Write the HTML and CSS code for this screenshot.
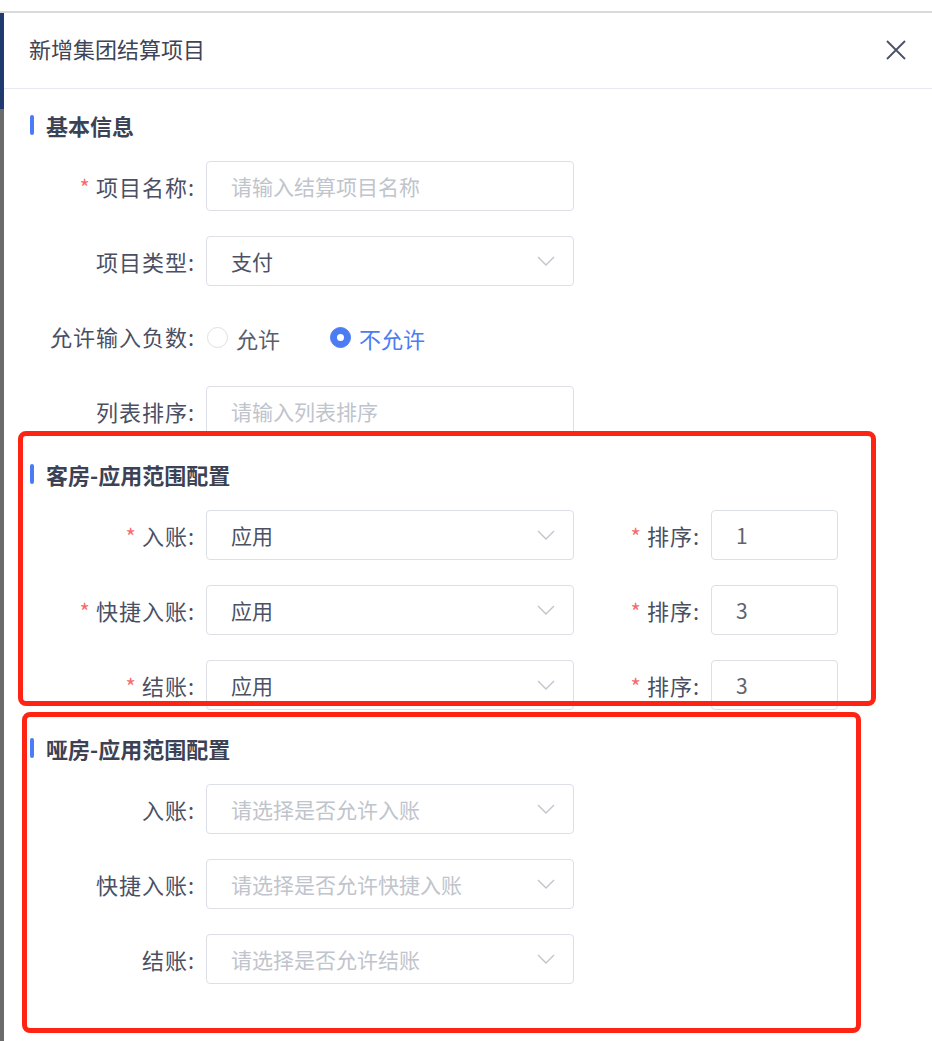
FILE: index.html
```html
<!DOCTYPE html>
<html lang="zh-CN">
<head>
    <meta charset="UTF-8">
    <meta name="viewport" content="width=device-width, initial-scale=1.0">
    <title>新增集团结算项目</title>
    <link rel="stylesheet" href="styles.css">
</head>
<body>
    <div class="page">
        <div class="topbar"></div>
        <div class="main">
            <div class="side-strip"><div class="strip-top"></div></div>

            <div class="drawer">
                <div class="drawer-header">
                    <span class="drawer-title">新增集团结算项目</span>
                    <button class="close-btn" aria-label="关闭">
                        <svg width="20" height="20" viewBox="0 0 20 20">
                            <path d="M1 1 L19 19 M19 1 L1 19" stroke="#4a5068" stroke-width="1.8" fill="none"/>
                        </svg>
                    </button>
                </div>

                <div class="drawer-body">
                    <!-- 基本信息 -->
                    <div class="section-title">基本信息</div>

                    <div class="form-row">
                        <div class="form-item">
                            <label class="form-label required">项目名称:</label>
                            <div class="input"><span class="placeholder">请输入结算项目名称</span></div>
                        </div>
                    </div>

                    <div class="form-row">
                        <div class="form-item">
                            <label class="form-label">项目类型:</label>
                            <div class="input select">
                                <span>支付</span>
                                <svg class="arrow" width="18" height="10" viewBox="0 0 18 10"><path d="M1 1 L9 9 L17 1" stroke="#c0c4cc" stroke-width="1.4" fill="none"/></svg>
                            </div>
                        </div>
                    </div>

                    <div class="form-row">
                        <div class="form-item">
                            <label class="form-label">允许输入负数:</label>
                            <div class="radio-group">
                                <span class="radio"><span class="radio-dot"></span>允许</span>
                                <span class="radio checked"><span class="radio-dot"></span>不允许</span>
                            </div>
                        </div>
                    </div>

                    <div class="form-row">
                        <div class="form-item">
                            <label class="form-label">列表排序:</label>
                            <div class="input"><span class="placeholder">请输入列表排序</span></div>
                        </div>
                    </div>

                    <!-- 客房 -->
                    <div class="section-title">客房-应用范围配置</div>

                    <div class="form-row">
                        <div class="form-item">
                            <label class="form-label required">入账:</label>
                            <div class="input select">
                                <span>应用</span>
                                <svg class="arrow" width="18" height="10" viewBox="0 0 18 10"><path d="M1 1 L9 9 L17 1" stroke="#c0c4cc" stroke-width="1.4" fill="none"/></svg>
                            </div>
                        </div>
                        <div class="form-item">
                            <label class="form-label short required">排序:</label>
                            <div class="input input-sm"><span class="num">1</span></div>
                        </div>
                    </div>

                    <div class="form-row">
                        <div class="form-item">
                            <label class="form-label required">快捷入账:</label>
                            <div class="input select">
                                <span>应用</span>
                                <svg class="arrow" width="18" height="10" viewBox="0 0 18 10"><path d="M1 1 L9 9 L17 1" stroke="#c0c4cc" stroke-width="1.4" fill="none"/></svg>
                            </div>
                        </div>
                        <div class="form-item">
                            <label class="form-label short required">排序:</label>
                            <div class="input input-sm"><span class="num">3</span></div>
                        </div>
                    </div>

                    <div class="form-row">
                        <div class="form-item">
                            <label class="form-label required">结账:</label>
                            <div class="input select">
                                <span>应用</span>
                                <svg class="arrow" width="18" height="10" viewBox="0 0 18 10"><path d="M1 1 L9 9 L17 1" stroke="#c0c4cc" stroke-width="1.4" fill="none"/></svg>
                            </div>
                        </div>
                        <div class="form-item">
                            <label class="form-label short required">排序:</label>
                            <div class="input input-sm"><span class="num">3</span></div>
                        </div>
                    </div>

                    <!-- 哑房 -->
                    <div class="section-title">哑房-应用范围配置</div>

                    <div class="form-row">
                        <div class="form-item">
                            <label class="form-label">入账:</label>
                            <div class="input select">
                                <span class="placeholder">请选择是否允许入账</span>
                                <svg class="arrow" width="18" height="10" viewBox="0 0 18 10"><path d="M1 1 L9 9 L17 1" stroke="#c0c4cc" stroke-width="1.4" fill="none"/></svg>
                            </div>
                        </div>
                    </div>

                    <div class="form-row">
                        <div class="form-item">
                            <label class="form-label">快捷入账:</label>
                            <div class="input select">
                                <span class="placeholder">请选择是否允许快捷入账</span>
                                <svg class="arrow" width="18" height="10" viewBox="0 0 18 10"><path d="M1 1 L9 9 L17 1" stroke="#c0c4cc" stroke-width="1.4" fill="none"/></svg>
                            </div>
                        </div>
                    </div>

                    <div class="form-row">
                        <div class="form-item">
                            <label class="form-label">结账:</label>
                            <div class="input select">
                                <span class="placeholder">请选择是否允许结账</span>
                                <svg class="arrow" width="18" height="10" viewBox="0 0 18 10"><path d="M1 1 L9 9 L17 1" stroke="#c0c4cc" stroke-width="1.4" fill="none"/></svg>
                            </div>
                        </div>
                    </div>
                </div>
            </div>
        </div>

        <!-- red annotation boxes -->
        <div class="mark mark-1"></div>
        <div class="mark mark-2"></div>
    </div>
</body>
</html>
```

FILE: styles.css
```css
body {
    margin: 0;
    font-family: "Noto Sans CJK SC", "Noto Sans", sans-serif;
    background: #fff;
    color: #4a4f64;
}
.page {
    position: relative;
    width: 932px;
    height: 1041px;
    overflow: hidden;
}
.topbar {
    height: 11px;
    border-bottom: 2px solid #dadada;
}
.main {
    display: flex;
    height: 1028px;
}
.side-strip {
    width: 4px;
    background: #6b6b6b;
}
.strip-top {
    height: 96px;
    background: #1f3a70;
}
.drawer {
    flex: 1;
}
.drawer-header {
    height: 75px;
    border-bottom: 1px solid #e6e9f0;
    display: flex;
    align-items: center;
    justify-content: space-between;
    padding: 0 26px 0 25px;
}
.drawer-title {
    margin-bottom: 6px;
    font-size: 22px;
    color: #3f4557;
}
.close-btn {
    border: none;
    background: none;
    padding: 0;
    width: 20px;
    height: 20px;
    margin-bottom: 2px;
    cursor: pointer;
}
.drawer-body {
    padding: 23px 0 0 26px;
}
.section-title {
    display: flex;
    align-items: center;
    height: 26px;
    margin-bottom: 23px;
    font-size: 22px;
    font-weight: 700;
    color: #3c4254;
}
.section-title::before {
    content: "";
    width: 4px;
    height: 20px;
    margin-right: 12px;
    border-radius: 2px;
    background: #4a7cf7;
}
.form-row {
    display: flex;
    height: 50px;
    margin-bottom: 25px;
}
.form-item {
    display: flex;
    align-items: center;
}
.form-label {
    width: 176px;
    padding-right: 11px;
    box-sizing: border-box;
    text-align: right;
    font-size: 22px;
    letter-spacing: 1px;
    color: #4a4f64;
}
.form-label.short {
    width: 137px;
}
.required::before {
    content: "*";
    color: #f56c6c;
    margin-right: 5px;
}
.input {
    width: 368px;
    height: 50px;
    box-sizing: border-box;
    display: flex;
    align-items: center;
    padding: 0 18px 0 24px;
    border: 1px solid #dcdfe6;
    border-radius: 4px;
    font-size: 21px;
    color: #4c5164;
}
.input-sm {
    width: 127px;
}
.select {
    justify-content: space-between;
}
.placeholder {
    color: #c0c4cc;
}
.num {
    color: #5f6370;
}
.radio-group {
    display: flex;
    align-items: center;
    padding-top: 3px;
    font-size: 22px;
}
.radio {
    display: flex;
    align-items: center;
    margin-right: 49px;
    color: #5a5e6c;
}
.radio-dot {
    width: 21px;
    height: 21px;
    box-sizing: border-box;
    margin: 0 8px 0 1px;
    border: 1px solid #dcdfe6;
    border-radius: 50%;
}
.radio.checked {
    color: #4b7cf3;
}
.radio.checked .radio-dot {
    display: flex;
    align-items: center;
    justify-content: center;
    border-color: #4b7cf3;
    background: #4b7cf3;
}
.radio.checked .radio-dot::after {
    content: "";
    width: 7px;
    height: 7px;
    border-radius: 50%;
    background: #fff;
}
.mark {
    position: absolute;
    box-sizing: border-box;
    border: 5px solid #fe2414;
    border-radius: 8px;
}
.mark-1 {
    left: 18px;
    top: 431px;
    width: 858px;
    height: 275px;
}
.mark-2 {
    left: 22px;
    top: 712px;
    width: 839px;
    height: 321px;
}
```
